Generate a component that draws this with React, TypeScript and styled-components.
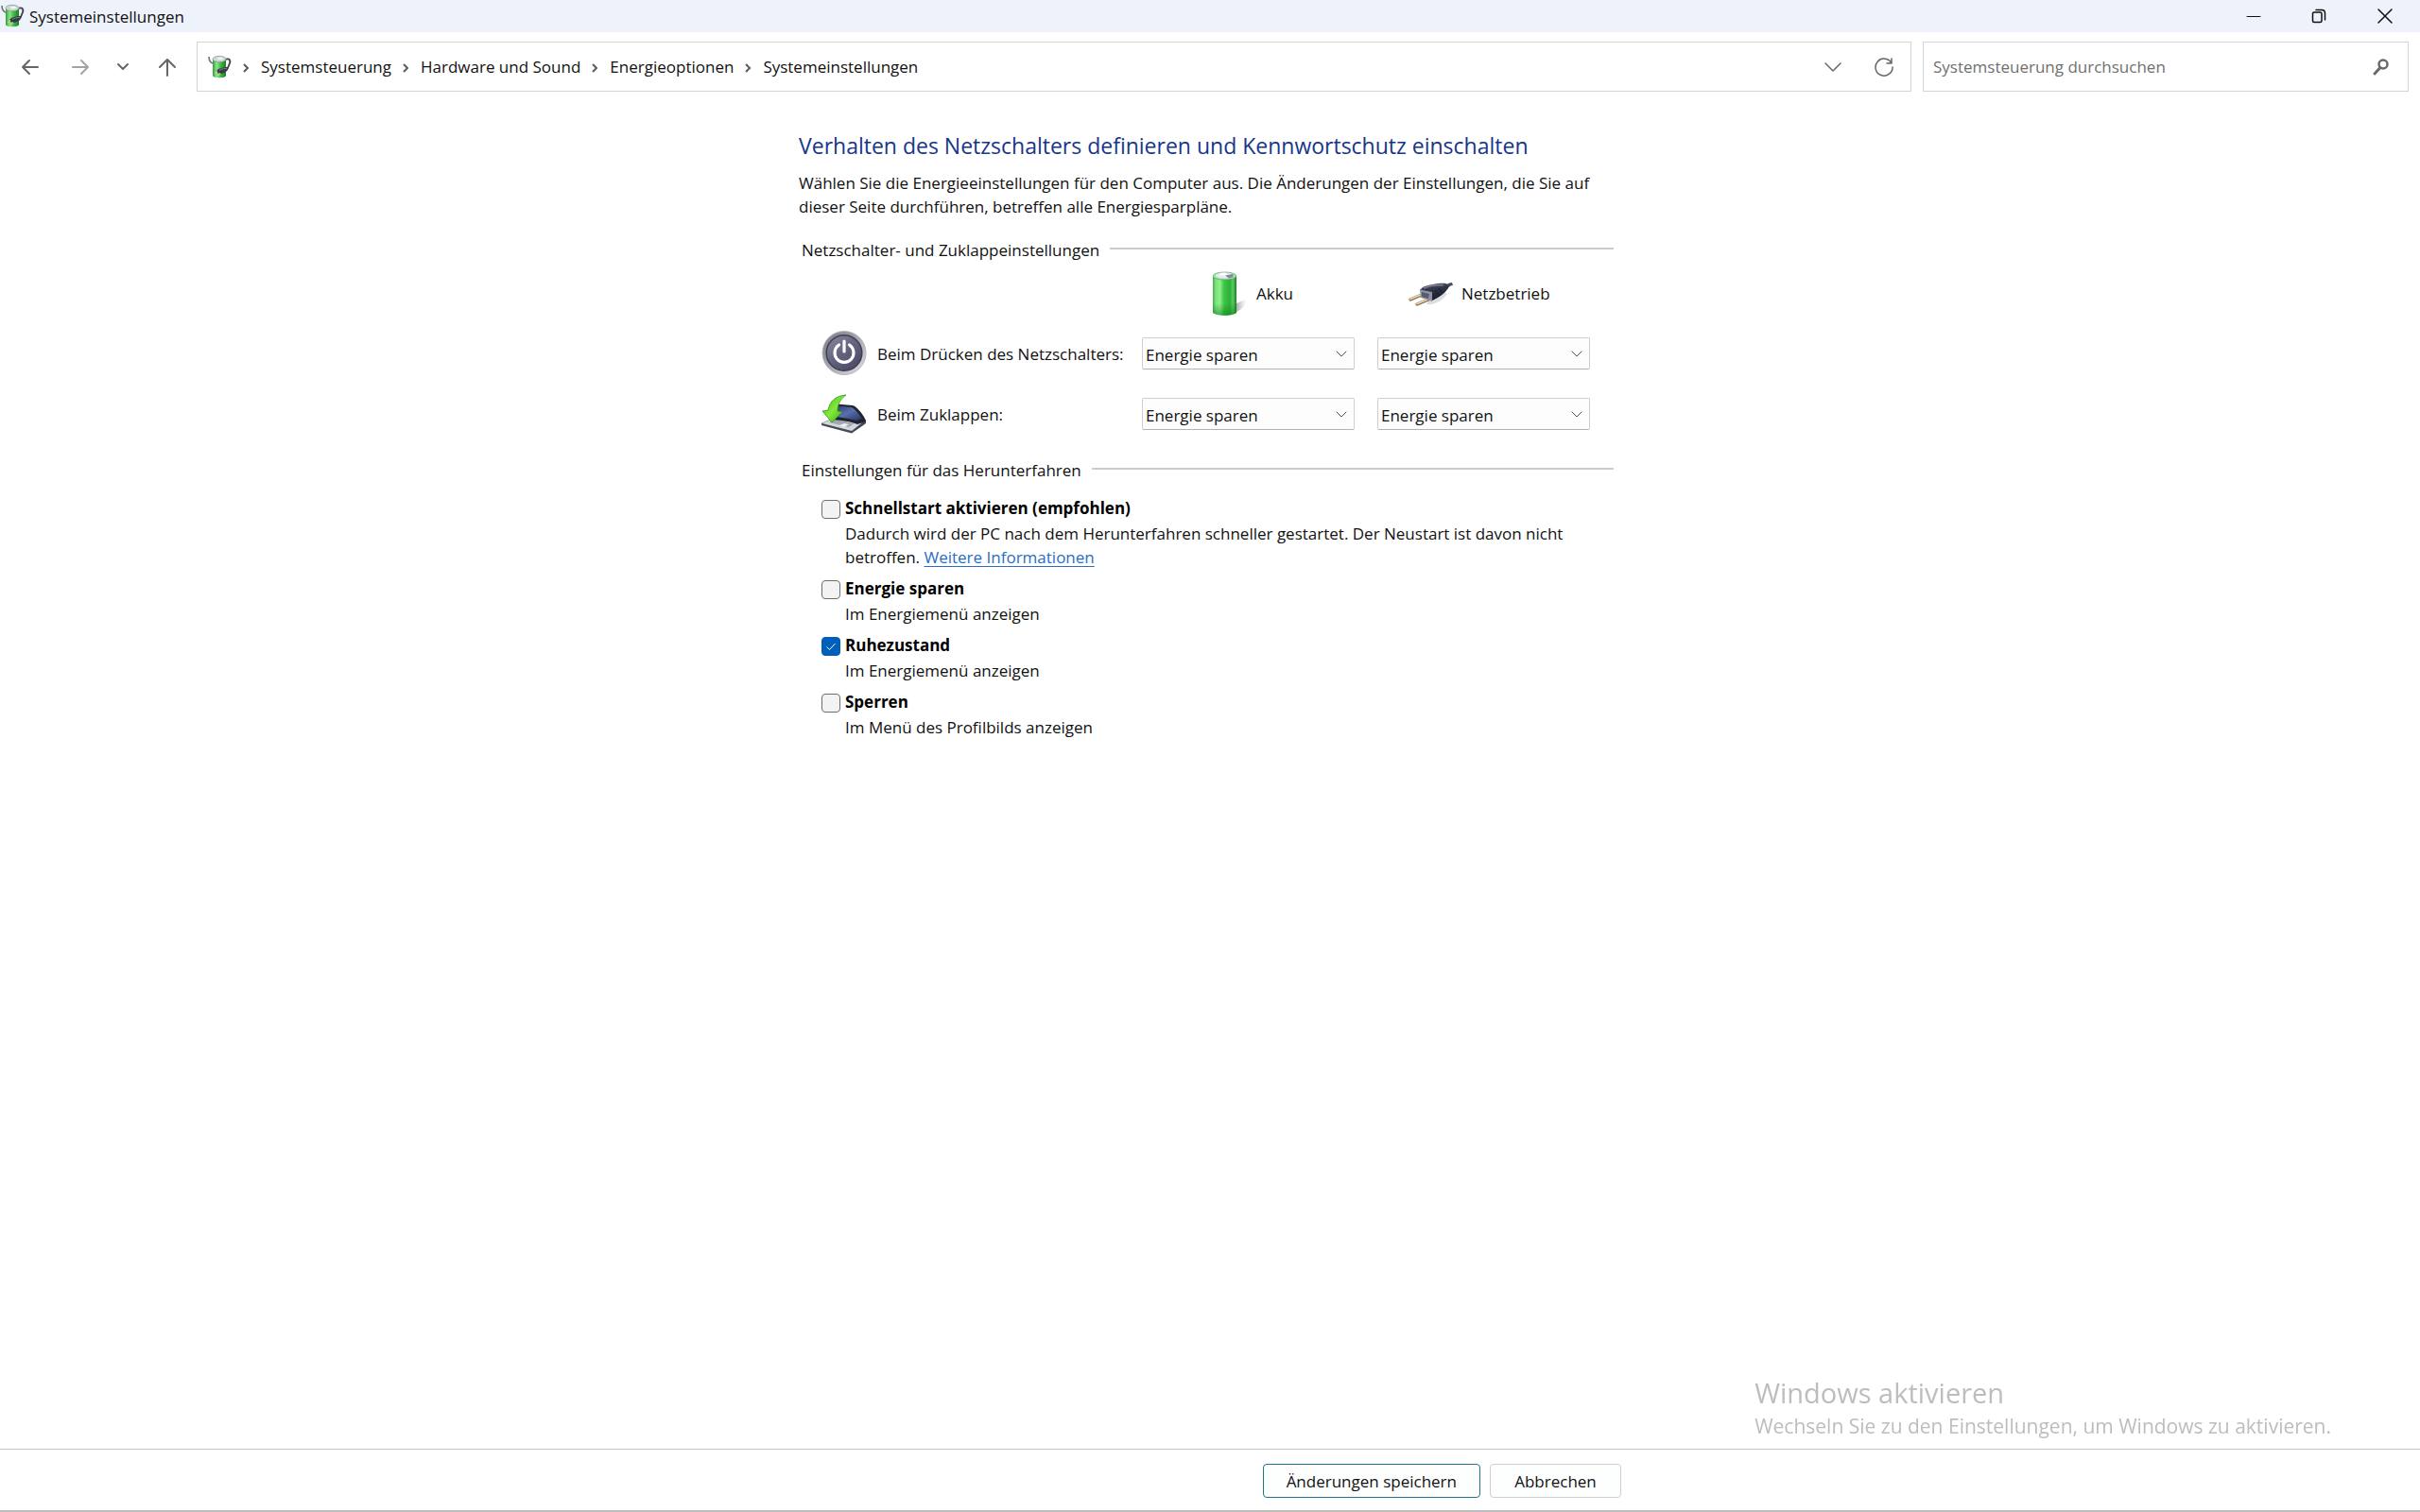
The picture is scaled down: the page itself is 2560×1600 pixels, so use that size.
import React, { useState } from "react";
import styled, { createGlobalStyle } from "styled-components";

const GlobalStyle = createGlobalStyle`
  *, *::before, *::after { box-sizing: border-box; }
  body {
    margin: 0;
    background: #fff;
    color: #111;
    font-family: "Open Sans", "Noto Sans", sans-serif;
    font-size: 17px;
    line-height: 25px;
  }
  h1, h2, p { margin: 0; font-weight: 400; }
  button, input, select { font: inherit; color: inherit; }
  svg { flex-shrink: 0; }
`;

const Window = styled.div`
  min-height: 100vh;
  display: flex;
  flex-direction: column;
`;

const TitleBar = styled.header`
  display: flex;
  align-items: center;
  justify-content: space-between;
  height: 34px;
  padding: 0 2px 0 1px;
  background: #eef2fb;
`;

const WindowTitle = styled.div`
  display: flex;
  align-items: center;
  gap: 5px;
`;

const WindowControls = styled.div`
  display: flex;
  height: 100%;
`;

const IconButton = styled.button<{ $width: number; $color?: string }>`
  display: flex;
  align-items: center;
  justify-content: center;
  width: ${(p) => p.$width}px;
  height: 100%;
  padding: 0;
  border: 0;
  background: transparent;
  color: ${(p) => p.$color ?? "#666"};
`;

const NavBar = styled.nav`
  display: flex;
  align-items: stretch;
  height: 73px;
  padding: 10px 12px 10px 8px;
`;

const NavButtons = styled.div`
  display: flex;
  width: 200px;
`;

const AddressBar = styled.div`
  display: flex;
  flex: 1;
  align-items: center;
  padding: 0 1px 0 11px;
  border: 1px solid #d4d4d0;
`;

const Crumbs = styled.ol`
  display: flex;
  flex: 1;
  align-items: center;
  margin: 0;
  padding: 0;
  list-style: none;
`;

const Crumb = styled.li`
  display: flex;
  align-items: center;
`;

const CrumbLink = styled.a`
  color: inherit;
  text-decoration: none;
`;

const Separator = styled.svg`
  width: 8px;
  height: 12px;
  margin: 2px 12px 0 11px;
  color: #5a5a5a;
`;

const SearchBox = styled.label`
  display: flex;
  align-items: center;
  width: 514px;
  margin-left: 12px;
  padding: 0 18px 0 10px;
  border: 1px solid #d4d4d4;
`;

const SearchInput = styled.input`
  flex: 1;
  min-width: 0;
  padding: 0;
  border: 0;
  outline: 0;
  background: transparent;
  &::placeholder { color: #6f6f6f; opacity: 1; }
`;

const Main = styled.main`
  flex: 1;
  width: 100%;
  max-width: 870px;
  margin: 0 auto;
  padding: 31px 0 40px;
`;

const Heading = styled.h1`
  font-size: 23px;
  line-height: 32px;
  color: #17368a;
`;

const Intro = styled.p`
  margin-top: 11px;
`;

const SectionHeader = styled.h2<{ $top: number }>`
  display: flex;
  align-items: center;
  gap: 11px;
  margin-top: ${(p) => p.$top}px;
  padding: 0 8px 0 3px;
  font-size: 17px;
  line-height: 25px;
  &::after {
    content: "";
    flex: 1;
    height: 2px;
    margin-bottom: 3px;
    background: #cbcbcb;
  }
`;

const PowerGrid = styled.div`
  display: grid;
  grid-template-columns: minmax(0, 1fr) 225px 225px;
  grid-auto-rows: 48px;
  align-items: center;
  gap: 16px 24px;
  margin-top: 9px;
  padding: 0 33px 0 24px;
`;

const SourceHead = styled.div<{ $column: number; $indent: number }>`
  grid-column-start: ${(p) => p.$column};
  display: flex;
  align-items: center;
  gap: 9px;
  padding-left: ${(p) => p.$indent}px;
`;

const RowLabel = styled.div`
  display: flex;
  align-items: center;
  gap: 11px;
  white-space: nowrap;
`;

const SelectBox = styled.div`
  display: grid;
  align-items: center;
  > * { grid-area: 1 / 1; }
  > svg { justify-self: end; margin-right: 7px; pointer-events: none; color: #555; }
`;

const Select = styled.select`
  appearance: none;
  width: 100%;
  height: 34px;
  padding: 2px 28px 0 3px;
  border: 1px solid #cfcfcf;
  border-bottom-color: #b4b4b4;
  border-radius: 2px;
  background: #fdfdfd;
`;

const Options = styled.div`
  display: flex;
  flex-direction: column;
  gap: 8px;
  margin-top: 15px;
  padding: 0 45px 0 24px;
`;

const Option = styled.div`
  display: grid;
  grid-template-columns: 20px 1fr;
  column-gap: 5px;
  row-gap: 2px;
`;

const OptionLabel = styled.label`
  justify-self: start;
  font-weight: 700;
  color: #000;
`;

const OptionText = styled.p`
  grid-column: 2;
`;

const CheckCell = styled.span`
  display: grid;
  place-items: center;
  height: 20px;
  margin-top: 4px;
  > * { grid-area: 1 / 1; }
  > svg { pointer-events: none; }
`;

const Checkbox = styled.input`
  appearance: none;
  width: 20px;
  height: 20px;
  margin: 0;
  border: 1px solid #6f6f6f;
  border-radius: 4px;
  background: #f3f3f3;
  &:checked { border-color: #005fb8; background: #005fb8; }
`;

const MoreLink = styled.a`
  color: #2a6ebf;
  text-underline-offset: 3px;
`;

const Watermark = styled.aside`
  position: fixed;
  right: 94px;
  bottom: 75px;
  color: #bdbdbd;
  font-size: 21px;
  line-height: 32px;
  pointer-events: none;
`;

const WatermarkTitle = styled.p`
  font-size: 29px;
  line-height: 38px;
`;

const Footer = styled.footer`
  padding: 15px 0 13px;
  border-top: 1px solid #c6c6c6;
  border-bottom: 2px solid #bebebe;
`;

const FooterInner = styled.div`
  display: flex;
  justify-content: flex-end;
  gap: 10px;
  max-width: 870px;
  margin: 0 auto;
`;

const PushButton = styled.button<{ $primary?: boolean }>`
  height: 36px;
  min-width: 139px;
  padding: 0 24px;
  border: 1px solid ${(p) => (p.$primary ? "#21748f" : "#cfcfcf")};
  border-radius: 4px;
  background: #fdfefe;
`;

type LineProps = { d: string; size?: number; width?: number };

const Line = ({ d, size = 20, width = 2 }: LineProps) => (
  <svg width={size} height={size} viewBox={`0 0 ${size} ${size}`} fill="none" stroke="currentColor" strokeWidth={width} strokeLinecap="round" strokeLinejoin="round" aria-hidden="true">
    <path d={d} />
  </svg>
);

const CrumbArrow = () => (
  <Separator viewBox="0 0 8 12" fill="none" stroke="currentColor" strokeWidth="2" aria-hidden="true">
    <path d="M2 2l4 4-4 4" />
  </Separator>
);

const PowerOptionsIcon = ({ id }: { id: string }) => (
  <svg width="25" height="26" viewBox="0 0 25 26" aria-hidden="true">
    <defs>
      <linearGradient id={id} x1="0" x2="1">
        <stop offset="0" stopColor="#2f9a3c" />
        <stop offset=".3" stopColor="#8be58b" />
        <stop offset=".65" stopColor="#35b53f" />
        <stop offset="1" stopColor="#1c7a2a" />
      </linearGradient>
    </defs>
    <path d="M1 2c0 4 1 6 4 7" fill="none" stroke="#6d7378" strokeWidth="1.6" />
    <path d="M18 5c5-2 6 1 5 4-1 3-2 5-4 8" fill="none" stroke="#3c4249" strokeWidth="1.800" />
    <path d="M5 5v17c0 3 14 3 14 0V5z" fill={`url(#${id})`} />
    <ellipse cx="12" cy="4.500" rx="7" ry="3.200" fill="#cfd8d3" stroke="#7d9a84" strokeWidth=".7" />
    <ellipse cx="13" cy="4" rx="3" ry="1.200" fill="#f4f6f5" />
    <path d="M9 17c2-3 7-4 13-4-1 4-4 6-8 7-3 0-5-1-5-3z" fill="#363c44" />
    <path d="M10 17.500l-3 2.500M13 19.500l-3 2.500" stroke="#d9c58e" strokeWidth="1.300" />
    <path d="M12 16.500c3-2 6-2 8-2" stroke="#7b828c" fill="none" />
  </svg>
);

const BatteryIcon = () => (
  <svg width="48" height="48" viewBox="0 0 48 48" aria-hidden="true">
    <defs>
      <linearGradient id="cell" x1="0" x2="1">
        <stop offset="0" stopColor="#3fae45" />
        <stop offset=".12" stopColor="#7fe07f" />
        <stop offset=".3" stopColor="#8af088" />
        <stop offset=".48" stopColor="#3cc444" />
        <stop offset=".72" stopColor="#2fae39" />
        <stop offset=".85" stopColor="#57cc5c" />
        <stop offset="1" stopColor="#1c7c2a" />
      </linearGradient>
      <linearGradient id="cellShade" x1="0" x2="0" y1="0" y2="1">
        <stop offset=".7" stopColor="#0a7a18" stopOpacity="0" />
        <stop offset="1" stopColor="#0a7a18" stopOpacity=".55" />
      </linearGradient>
      <linearGradient id="cellShadow" x1="0" x2="1">
        <stop offset="0" stopColor="#777" stopOpacity=".75" />
        <stop offset="1" stopColor="#999" stopOpacity="0" />
      </linearGradient>
    </defs>
    <path d="M34 45l2-10 9-4c3 3-1 10-11 14z" fill="url(#cellShadow)" />
    <path d="M11 6v38c0 5 25 5 25 0V6z" fill="url(#cell)" />
    <path d="M11 6v38c0 5 25 5 25 0V6z" fill="url(#cellShade)" />
    <ellipse cx="23.500" cy="6" rx="12.300" ry="4" fill="#a9e3ac" stroke="#5fae66" strokeWidth=".8" />
    <ellipse cx="23.500" cy="5.600" rx="9.500" ry="3" fill="#e9e7f1" />
    <path d="M24 5.500l8-1.500c2 2 0 4-4 4.500z" fill="#8c84a3" />
    <ellipse cx="22" cy="4.200" rx="4" ry="1.400" fill="#fff" />
  </svg>
);

const PlugIcon = () => (
  <svg width="48" height="48" viewBox="0 0 48 48" aria-hidden="true">
    <defs>
      <linearGradient id="plugBody" x1="0" x2=".3" y1="0" y2="1">
        <stop offset="0" stopColor="#6a6d80" />
        <stop offset=".4" stopColor="#34374b" />
        <stop offset="1" stopColor="#1b1d2c" />
      </linearGradient>
    </defs>
    <path d="M20 36c8 1 16-3 22-11l-4-2-16 9z" fill="#bbb" opacity=".5" />
    <path d="M3 31l12-5M10 36l12-5" stroke="#8a6f45" strokeWidth="3.200" strokeLinecap="round" />
    <path d="M3 30.500l12-5M10 35.500l12-5" stroke="#ecd9ac" strokeWidth="1.600" strokeLinecap="round" />
    <path d="M40 16c2-2 5-3 7-3l1 3c-3 0-5 2-6 4z" fill="#4a4c58" />
    <path d="M13 21l3-3c7-3 18-5 25-4l3 3c-4 8-12 12-18 15l-3 0z" fill="url(#plugBody)" />
    <path d="M13 20.500l13 2.500v10l-12-4z" fill="#8f90a4" />
    <path d="M15 23l8 2-1 5-7-2z" fill="#5a5b70" />
    <path d="M17 19c7-3 14-4 21-3" fill="none" stroke="#8b8ea0" strokeWidth="1.200" />
    <path d="M29 21l5 6M33 19l4 5" stroke="#15172a" strokeWidth="1" />
  </svg>
);

const PowerButtonIcon = () => (
  <svg width="48" height="48" viewBox="0 0 48 48" aria-hidden="true">
    <defs>
      <linearGradient id="ring" x1="0" x2="1" y1="0" y2="1">
        <stop offset="0" stopColor="#77777f" />
        <stop offset=".5" stopColor="#a7a7b0" />
        <stop offset="1" stopColor="#e3e3e8" />
      </linearGradient>
      <linearGradient id="disc" x1="0" x2=".8" y1="0" y2="1">
        <stop offset="0" stopColor="#8c8ca4" />
        <stop offset=".5" stopColor="#66657f" />
        <stop offset="1" stopColor="#4a4965" />
      </linearGradient>
    </defs>
    <circle cx="24" cy="23.500" r="23" fill="url(#ring)" stroke="#b5b5bb" strokeWidth="1" />
    <circle cx="24" cy="23.500" r="18.800" fill="url(#disc)" stroke="#3e3d52" strokeWidth="1.500" />
    <path d="M18.500 15a10 10 0 1 0 11 0" fill="none" stroke="#fff" strokeWidth="3.200" strokeLinecap="round" />
    <path d="M24 11v11" stroke="#fff" strokeWidth="3.200" strokeLinecap="round" />
  </svg>
);

const LidIcon = () => (
  <svg width="48" height="48" viewBox="0 0 48 48" aria-hidden="true">
    <defs>
      <linearGradient id="lid" x1="0" x2="1" y1="0" y2="1">
        <stop offset="0" stopColor="#2b3560" />
        <stop offset=".5" stopColor="#5a6fb0" />
        <stop offset="1" stopColor="#27305c" />
      </linearGradient>
      <linearGradient id="arrow" x1="0" x2="1" y1="0" y2="1">
        <stop offset="0" stopColor="#3eb51b" />
        <stop offset=".5" stopColor="#86e83a" />
        <stop offset="1" stopColor="#2fa312" />
      </linearGradient>
    </defs>
    <path d="M0 34l12-5 34 5-14 9z" fill="#d5d7dd" stroke="#8d9099" strokeWidth=".8" />
    <path d="M0 34l32 8 15-12v4L32 44.500 0 36z" fill="#454957" />
    <path d="M8 33l7-3 20 4-6 4z" fill="#a3a6b0" />
    <path d="M19 36l5-2 5 1-5 3z" fill="#eceef2" />
    <path d="M10 13l23 2c3 0 13 11 14 17l-9 3c-7-3-17-4-25-5z" fill="#20242f" />
    <path d="M12 15l20 2c4 2 9 9 11 12l-6 2c-7-2-14-3-21-4z" fill="url(#lid)" />
    <path d="M26 4C15 5 9 10 7 20l-6 1 10 12 11-11-5-1c0-7 3-13 9-17z" fill="url(#arrow)" stroke="#2c9a16" strokeWidth=".8" />
  </svg>
);

const CHOICES = ["Nichts unternehmen", "Energie sparen", "Ruhezustand", "Herunterfahren"];

const ActionSelect = ({ label }: { label: string }) => (
  <SelectBox>
    <Select aria-label={label} defaultValue="Energie sparen">
      {CHOICES.map((c) => <option key={c}>{c}</option>)}
    </Select>
    <Line size={14} width={1} d="M2 5l5 5 5-5" />
  </SelectBox>
);

const OPTIONS: { id: string; label: string; text: React.ReactNode }[] = [
  {
    id: "fast",
    label: "Schnellstart aktivieren (empfohlen)",
    text: (
      <>
        Dadurch wird der PC nach dem Herunterfahren schneller gestartet. Der Neustart ist davon nicht betroffen.{" "}
        <MoreLink href="#info">Weitere Informationen</MoreLink>
      </>
    ),
  },
  { id: "sleep", label: "Energie sparen", text: "Im Energiemenü anzeigen" },
  { id: "hibernate", label: "Ruhezustand", text: "Im Energiemenü anzeigen" },
  { id: "lock", label: "Sperren", text: "Im Menü des Profilbilds anzeigen" },
];

const ROWS = [
  { label: "Beim Drücken des Netzschalters:", icon: <PowerButtonIcon /> },
  { label: "Beim Zuklappen:", icon: <LidIcon /> },
];

const PATH = ["Systemsteuerung", "Hardware und Sound", "Energieoptionen", "Systemeinstellungen"];

export default function App() {
  const [checked, setChecked] = useState<Record<string, boolean>>({ hibernate: true });

  return (
    <Window>
      <GlobalStyle />
      <TitleBar>
        <WindowTitle>
          <PowerOptionsIcon id="appTitle" />
          Systemeinstellungen
        </WindowTitle>
        <WindowControls>
          <IconButton $width={69} $color="#111" aria-label="Minimieren"><Line size={16} width={1} d="M1 8.500h14" /></IconButton>
          <IconButton $width={70} $color="#111" aria-label="Verkleinern">
            <Line size={16} width={1.5} d="M3 4h6.500q1.500 0 1.500 1.500V13q0 1.500-1.500 1.500H3Q1.500 14.500 1.500 13V5.500Q1.500 4 3 4M5 1.500h6q3.500 0 3.500 3.500v7" />
          </IconButton>
          <IconButton $width={70} $color="#111" aria-label="Schließen"><Line size={16} width={1.5} d="M1 1l14 14M15 1L1 15" /></IconButton>
        </WindowControls>
      </TitleBar>

      <NavBar>
        <NavButtons>
          <IconButton $width={48} aria-label="Zurück"><Line d="M18 10H2M9 3l-7 7 7 7" /></IconButton>
          <IconButton $width={58} $color="#a3a3a3" aria-label="Vorwärts"><Line d="M2 10h16M11 3l7 7-7 7" /></IconButton>
          <IconButton $width={32} aria-label="Zuletzt besucht"><Line size={14} d="M2 4l5 5 5-5" /></IconButton>
          <IconButton $width={62} aria-label="Nach oben"><Line d="M10 19V2M2 10l8-8 8 8" /></IconButton>
        </NavButtons>
        <AddressBar>
          <PowerOptionsIcon id="appPath" />
          <Crumbs>
            {PATH.map((p) => (
              <Crumb key={p}>
                <CrumbArrow />
                <CrumbLink href="#path">{p}</CrumbLink>
              </Crumb>
            ))}
          </Crumbs>
          <IconButton $width={54} aria-label="Verlauf"><Line size={18} width={1.5} d="M1 5l8 8 8-8" /></IconButton>
          <IconButton $width={54} aria-label="Aktualisieren">
            <Line size={22} width={1.5} d="M19 7A9 9 0 1 0 20 11M19 2v5h-5" />
          </IconButton>
        </AddressBar>
        <SearchBox>
          <SearchInput type="search" aria-label="Suche" placeholder="Systemsteuerung durchsuchen" />
          <svg width="20" height="20" viewBox="0 0 20 20" fill="none" stroke="#6a6a6a" aria-hidden="true">
            <circle cx="12" cy="7" r="4.500" strokeWidth="2.500" />
            <path d="M9 10.500L3 17" strokeWidth="3" strokeLinecap="round" />
          </svg>
        </SearchBox>
      </NavBar>

      <Main>
        <Heading>Verhalten des Netzschalters definieren und Kennwortschutz einschalten</Heading>
        <Intro>
          Wählen Sie die Energieeinstellungen für den Computer aus. Die Änderungen der Einstellungen, die Sie auf
          dieser Seite durchführen, betreffen alle Energiesparpläne.
        </Intro>

        <SectionHeader $top={21}>Netzschalter- und Zuklappeinstellungen</SectionHeader>
        <PowerGrid>
          <SourceHead $column={2} $indent={64}><BatteryIcon />Akku</SourceHead>
          <SourceHead $column={3} $indent={32}><PlugIcon />Netzbetrieb</SourceHead>
          {ROWS.map((r) => (
            <React.Fragment key={r.label}>
              <RowLabel>{r.icon}{r.label}</RowLabel>
              <ActionSelect label={`${r.label} Akku`} />
              <ActionSelect label={`${r.label} Netzbetrieb`} />
            </React.Fragment>
          ))}
        </PowerGrid>

        <SectionHeader $top={23}>Einstellungen für das Herunterfahren</SectionHeader>
        <Options>
          {OPTIONS.map((o) => (
            <Option key={o.id}>
              <CheckCell>
                <Checkbox
                  type="checkbox"
                  id={o.id}
                  checked={!!checked[o.id]}
                  onChange={(e) => setChecked({ ...checked, [o.id]: e.target.checked })}
                />
                {checked[o.id] && (
                  <svg width="12" height="12" viewBox="0 0 12 12" fill="none" stroke="#fff" aria-hidden="true">
                    <path d="M1.500 6.500l3 3 6-6.500" />
                  </svg>
                )}
              </CheckCell>
              <OptionLabel htmlFor={o.id}>{o.label}</OptionLabel>
              <OptionText>{o.text}</OptionText>
            </Option>
          ))}
        </Options>
      </Main>

      <Watermark>
        <WatermarkTitle>Windows aktivieren</WatermarkTitle>
        <p>Wechseln Sie zu den Einstellungen, um Windows zu aktivieren.</p>
      </Watermark>

      <Footer>
        <FooterInner>
          <PushButton $primary>Änderungen speichern</PushButton>
          <PushButton>Abbrechen</PushButton>
        </FooterInner>
      </Footer>
    </Window>
  );
}
